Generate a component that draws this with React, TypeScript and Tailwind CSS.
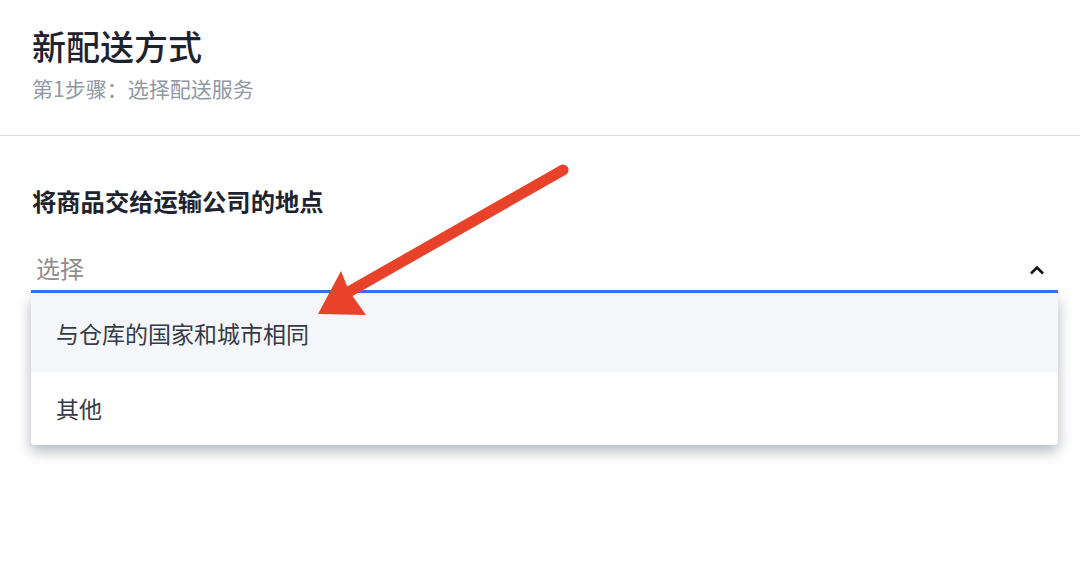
import React from "react";

const font = { fontFamily: '"Noto Sans CJK SC", "Noto Sans", sans-serif' };

export default function App() {
  return (
    <div className="relative w-[1080px] h-[561px] bg-white overflow-hidden" style={font}>
      <div className="pl-[32px] pt-[26px] pb-[33px] border-b border-[#d9dce2]">
        <div className="text-[34px] leading-[40px] text-[#1e2330] font-medium">新配送方式</div>
        <div className="mt-[8px] text-[21px] leading-[28px] text-[#9097a6]">第1步骤：选择配送服务</div>
      </div>
      <div className="ml-[31px] mr-[22px]">
        <div className="mt-[49px] pl-[1px] text-[24.3px] leading-[32px] font-bold text-[#1e2330]">将商品交给运输公司的地点</div>
        <div className="relative mt-[28px]">
          <div className="h-[48px] flex items-center justify-between pl-[5px] pr-[13px] border-b-[3px] border-[#3a6cf6]">
            <span className="text-[24px] leading-[32px] text-[#8c8c8c]">选择</span>
            <svg width="16" height="10" viewBox="0 0 16 10" className="mt-[4px]">
              <path d="M2 8.5 L8 2.5 L14 8.5" fill="none" stroke="#111" strokeWidth="2.6" strokeLinecap="butt" strokeLinejoin="miter" />
            </svg>
          </div>
          <div className="absolute left-0 right-0 top-[50px] bg-white rounded-b-[4px] shadow-[0_6px_14px_rgba(60,70,90,0.4)] overflow-hidden">
            <div className="h-[77px] flex items-center pl-[25px] bg-[#f5f6fa] text-[23px] text-[#343a46]">与仓库的国家和城市相同</div>
            <div className="h-[73px] flex items-center pl-[25px] bg-white text-[23px] text-[#343a46]">其他</div>
          </div>
        </div>
      </div>
      <svg className="absolute inset-0 pointer-events-none" width="1080" height="561" viewBox="0 0 1080 561">
        <line x1="563" y1="170" x2="345" y2="294" stroke="#e8422a" strokeWidth="11" strokeLinecap="round" />
        <polygon points="318,314 341,271 349,291 366,315" fill="#e8422a" />
      </svg>
    </div>
  );
}
